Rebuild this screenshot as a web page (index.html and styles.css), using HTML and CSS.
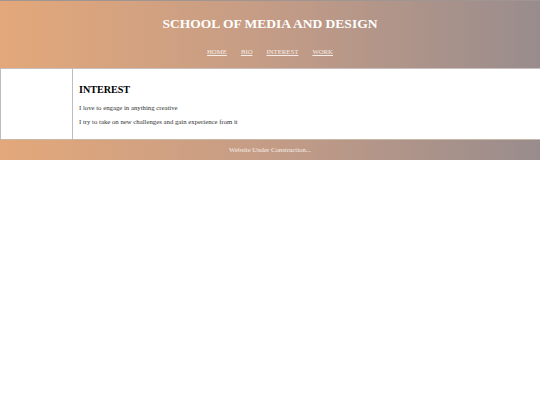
FILE: index.html
```html
<!DOCTYPE html>
<html>
<head>
<meta charset="utf-8">
<link rel="stylesheet" href="styles.css">
</head>
<body>
<header class="site-header">
  <h1 class="title">SCHOOL OF MEDIA AND DESIGN</h1>
  <nav class="nav">
    <a href="#">HOME</a>
    <a href="#">BIO</a>
    <a href="#">INTEREST</a>
    <a href="#">WORK</a>
  </nav>
</header>
<div class="main">
  <aside class="side"></aside>
  <section class="content">
    <h2>INTEREST</h2>
    <p>I love to engage in anything creative</p>
    <p>I try to take on new challenges and gain experience from it</p>
  </section>
</div>
<footer class="site-footer">Website Under Construction...</footer>
</body>
</html>
```
FILE: styles.css
```css
html, body { margin: 0; padding: 0; background: #fff; }
body { font-family: "Liberation Serif", "Times New Roman", serif; }
.site-header {
  height: 68px;
  box-sizing: border-box;
  border-top: 1px solid #a09590;
  background: linear-gradient(to right, #e3a87a, #c49c86 50%, #998c8d);
  text-align: center;
  color: #fff;
  padding-top: 14px;
}
.title { margin: 0; font-size: 13.5px; font-weight: bold; line-height: 17px; }
.nav { margin-top: 15px; font-size: 6.75px; line-height: 10px; display: flex; justify-content: center; gap: 14px; }
.nav a { color: #f4ece6; text-decoration: underline; }
.main { display: flex; height: 71px; border-top: 1px solid #c8c0bc; box-sizing: border-box; }
.side { width: 73px; border-left: 1px solid #bdbdbd; border-right: 1px solid #bdbdbd; box-sizing: border-box; }
.content { padding: 15px 7px 0 6px; }
.content h2 { margin: 0 0 6.5px; font-size: 10.1px; line-height: 12px; color: #000; }
.content p { margin: 0 0 5px; font-size: 6.75px; line-height: 9px; color: #333; }
.site-footer {
  height: 21px;
  background: linear-gradient(to right, #e3a87a, #c49c86 50%, #998c8d);
  border-top: 1px solid #c8b8a8;
  color: #f6eee8;
  font-size: 6.75px;
  text-align: center;
  line-height: 20px;
  box-sizing: border-box;
}
```
